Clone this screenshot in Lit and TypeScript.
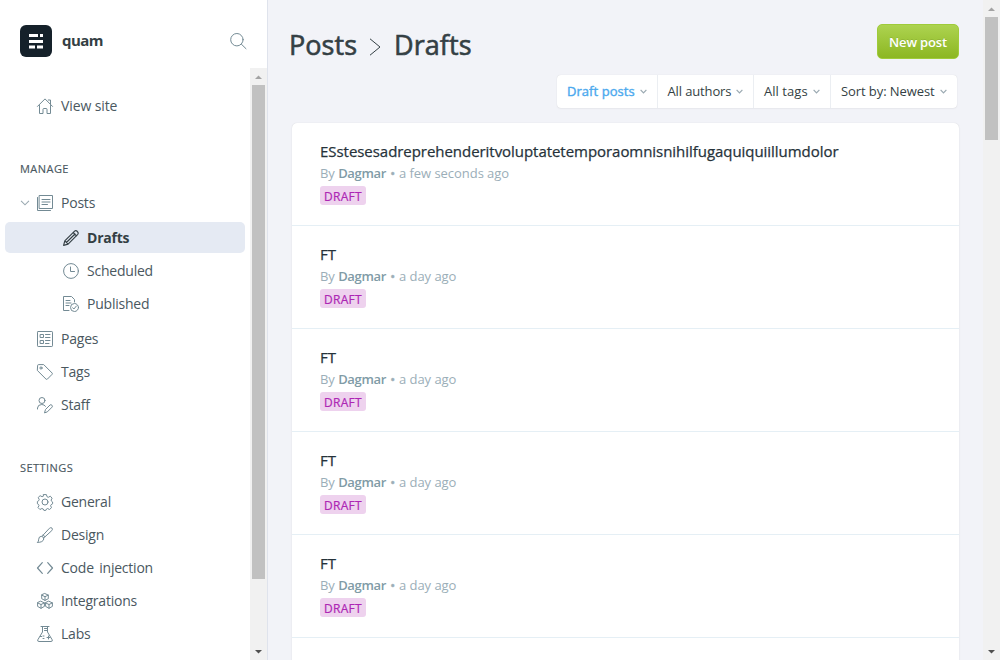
import { LitElement, html, css, svg } from "lit";
import { customElement } from "lit/decorators.js";
import { classMap } from "lit/directives/class-map.js";

// Icon bodies, all drawn on a 16 × 16 grid.
const icons = {
  search: svg`<circle cx="6.9" cy="6.7" r="6.2"/><path d="M11.4 11.2 16 15.7"/>`,
  house: svg`<path d="M.5 8.4 8 .9l7.500 7.500M11.300 2H13.500V6.300M2.500 7.500v8H6v-4.200Q6 10.500 7 10.500H9Q10 10.500 10 11.300V15.500h3.500v-8"/>`,
  posts: svg`<path d="M2.500.5h13v13h-13zM.5 2.500v13h13M5 4.500h8M5 7h8M5 9.500h5.500"/>`,
  pencil: svg`<path d="M.6 15.400 1.800 10.900 11.600 1.100Q12.900-.1 14.400 1.500 16 3.100 14.800 4.400L5.100 14.100ZM1.800 10.900 5.100 14.100M10.200 2.500l3.300 3.300M3.400 12.500 12 4"/>`,
  clock: svg`<circle cx="8" cy="8" r="7.400"/><path d="M7.500 4v4.500H11.500"/>`,
  published: svg`<path d="M6 14.500H.5V.5H8.500L11.500 3.500V6M3 4.500h4M3 7h5M3 9.500h3"/><circle cx="11.500" cy="11.500" r="4"/><path d="m9.600 11.700 1.300 1.300 2.500-3"/>`,
  pages: svg`<rect x=".5" y=".5" width="15" height="15" rx=".7"/><path d="M3.500 3.500h3v3h-3zM3.500 9.500h3v3h-3zM8.500 3.500H13M8.500 6.500H13M8.500 9.500H13M8.500 12.500H12"/>`,
  tag: svg`<path d="M.6 1.400Q.6.6 1.400.6H6.700L15.100 9Q15.700 9.700 15.100 10.300L10.400 15.100Q9.700 15.700 9 15.100L.6 6.700Z"/><circle cx="4" cy="4" r="1.100"/>`,
  staff: svg`<circle cx="5" cy="3.500" r="3"/><path d="M.5 12V11Q.8 7.500 4.800 7.500 7.300 7.500 8.500 9.300M7.600 15.500l.9-3L13 8Q13.900 7.200 14.900 8.200 15.900 9.200 15.100 10.100L10.600 14.600Z"/>`,
  gear: svg`<circle cx="8" cy="8" r="3"/><path d="M6.600.6h2.800l.6 2.100 1.300.6 2-1.100 1.800 2-1 1.900.5 1.200 1 .7v1.800l-1.500.9-.5 1 .9 2-2 1.800-1.900-1-1.100.5-.7 1.400H6.900l-.7-1.400-1.300-.5-2 1-1.900-2 1-1.900-.5-1.200-1.100-.6V7.500l1.300-.8.5-1.200-1-2 1.900-1.800 2 1 1-.4Z"/>`,
  brush: svg`<path d="M.6 15.400Q1.800 14.600 1.700 12.200 1.900 9.400 4.300 9.300 6.900 9.600 6.800 12 6 15.500.6 15.400M5 9.300 12.400 1.300Q13.800.1 15 1.100 16 2.200 14.800 3.600L6.700 11M6.200 8l1.800 1.800"/>`,
  code: svg`<path d="M5.300 2.700.5 8l4.800 5.300M10.700 2.700 15.500 8l-4.800 5.300" stroke-width="1.200"/>`,
  blocks: svg`<path d="m8 .6 3.300 1.500v3.600L8 7.400 4.700 5.700V2.100ZM4.700 2.100 8 3.700l3.300-1.600M8 3.700v3.700M4 8.300l3.400 1.600v3.500L4 15.300.6 13.400V9.900ZM.6 9.900 4 11.500l3.400-1.600M4 11.500v3.800M12 8.300l3.400 1.600v3.500L12 15.300l-3.400-1.900V9.900ZM8.600 9.900l3.400 1.600 3.400-1.600M12 11.500v3.800"/>`,
  flask: svg`<path d="M4 .5h8M5.500.5v5.500L.8 13.800Q.2 15.500 1.900 15.500H14.100Q15.800 15.500 15.200 13.800L10.500 6V.5M7.500 2.500h3M7.500 4.500h3M3.200 10.500h1.500M11.500 10v3M10 11.500h3M6 12.500h1M6 10h1"/>`,
};
type IconName = keyof typeof icons;

const glyph = (name: IconName) =>
  html`<svg class="icon" viewBox="0 0 16 16" width="16" height="16">${icons[name]}</svg>`;

const chevron = html`<svg class="chevron" viewBox="0 0 8 5" width="7" height="5"><path d="M.7.7 4 4 7.300.7"/></svg>`;

const scrollbar = (kind: string) => html`
  <div class="track ${kind}">
    <svg class="up" width="17" height="17"><path d="M5 11h7L8.500 7.500z"/></svg>
    <div class="thumb"></div>
    <svg class="down" width="17" height="17"><path d="M5 7h7L8.500 10.500z"/></svg>
  </div>`;

interface Item { icon: IconName; label: string; sub?: boolean; active?: boolean; open?: boolean }

const manage: Item[] = [
  { icon: "posts", label: "Posts", open: true },
  { icon: "pencil", label: "Drafts", sub: true, active: true },
  { icon: "clock", label: "Scheduled", sub: true },
  { icon: "published", label: "Published", sub: true },
  { icon: "pages", label: "Pages" },
  { icon: "tag", label: "Tags" },
  { icon: "staff", label: "Staff" },
];
const settings: Item[] = [
  { icon: "gear", label: "General" },
  { icon: "brush", label: "Design" },
  { icon: "code", label: "Code injection" },
  { icon: "blocks", label: "Integrations" },
  { icon: "flask", label: "Labs" },
];
const posts = [
  { title: "ESstesesadreprehenderitvoluptatetemporaomnisnihilfugaquiquiillumdolor", when: "a few seconds ago" },
  ...Array.from({ length: 4 }, () => ({ title: "FT", when: "a day ago" })),
];
const filters = ["Draft posts", "All authors", "All tags", "Sort by: Newest"];

@customElement("app-root")
export class AppRoot extends LitElement {
  static styles = css`
    :host { display: flex; height: 660px; overflow: hidden; background: #f2f3f8; color: #343f44; font-family: "Open Sans", "Noto Sans", sans-serif; }
    * { box-sizing: border-box; }
    svg { display: block; flex: none; }
    .icon { fill: none; stroke: #738a94; stroke-width: 1; stroke-linejoin: round; stroke-linecap: round; overflow: visible; }
    .chevron { fill: none; stroke: #9aa9b1; stroke-width: 1.400; }

    .side { width: 268px; flex: none; display: flex; flex-direction: column; background: #fff; border-right: 1px solid #dfe3ec; }
    .brand { height: 68px; flex: none; display: flex; align-items: center; padding: 14px 21px 0 20px; }
    .logo { margin-right: 10px; }
    .name { flex: 1; margin-top: -2px; font-size: 15px; font-weight: 700; letter-spacing: -0.550px; line-height: 20px; }
    .scroller { flex: 1; min-height: 0; display: flex; }
    nav { flex: 1; min-width: 0; padding: 22px 5px 0; overflow: hidden; }
    .row { height: 31px; margin-bottom: 2px; padding-left: 15px; display: flex; align-items: center; border-radius: 5px; font-size: 14px; letter-spacing: -0.220px; word-spacing: 2px; color: #4a585f; }
    .slot { width: 17px; flex: none; }
    .slot .chevron { width: 10px; height: 6px; stroke-width: 0.9; }
    .row .icon { margin-right: 8px; }
    .sub { padding-left: 58px; }
    .active { background: #e5eaf3; color: #343f44; font-weight: 700; }
    .active .icon { stroke: #343f44; stroke-width: 1.150; }
    .open { margin-bottom: 4px; }
    .last { margin-bottom: 4px; }
    .view { letter-spacing: -0.1px; word-spacing: 0; margin-bottom: 36px; }
    h2 { margin: 0 0 6px 15px; font-size: 11px; line-height: 24px; font-weight: 400; letter-spacing: 0.450px; color: #4a585f; -webkit-text-stroke: 0.150px currentColor; }
    .gap { margin-top: 36px; }

    .track { width: 17px; flex: none; display: flex; flex-direction: column; background: #f1f1f1; }
    .thumb { margin: 0 2px; background: #c1c1c1; }
    .up { fill: #a3a3a3; }
    .down { fill: #505050; margin-top: auto; }
    .inner .thumb { height: 494px; }
    .outer .thumb { height: 123px; }

    main { flex: 1; min-width: 0; padding: 24px 24px 0 24px; }
    header { height: 51px; display: flex; justify-content: space-between; align-items: flex-start; }
    h1 { margin: 0 0 0 -3px; display: flex; align-items: center; font-size: 27px; line-height: 42px; font-weight: 500; letter-spacing: 0.050px; -webkit-text-stroke: 0.600px currentColor; }
    h1 svg { margin: 3px 13px 0 12px; fill: none; stroke: #343f44; stroke-width: 1; }
    button { width: 82px; height: 35px; padding: 0; border: 1px solid #9fcb3a; border-radius: 5px; background: linear-gradient(#add350, #8cb722); color: #fff; font: 600 13px/20px "Open Sans", sans-serif; letter-spacing: -0.150px; text-shadow: 0 -1px 0 rgba(0, 0, 0, 0.1); }
    .filters { display: flex; width: 400px; height: 33px; margin: 0 2px 0 auto; background: #fff; border-radius: 4px; box-shadow: 0 0 1px rgba(0, 0, 0, 0.15), 0 1px 2px rgba(0, 0, 0, 0.04); }
    .filter { flex: none; display: flex; align-items: center; justify-content: space-between; padding: 0 10px 1px 10px; font-size: 13px; letter-spacing: -0.080px; border-left: 1px solid #ebeef2; white-space: nowrap; }
    .filter:nth-child(1) { width: 100px; border: 0; color: #4ca9ee; font-weight: 500; letter-spacing: 0.05px; -webkit-text-stroke: 0.400px currentColor; }
    .filter:nth-child(2) { width: 96px; padding-left: 9.500px; letter-spacing: -0.130px; }
    .filter:nth-child(3) { width: 77px; letter-spacing: 0.050px; }
    .filter:nth-child(4) { width: 127px; }
    .list { height: 560px; margin-top: 15px; background: #fff; border-radius: 5px; box-shadow: 0 0 1px rgba(0, 0, 0, 0.15), 0 1px 3px rgba(0, 0, 0, 0.04); }
    .post { height: 103px; padding: 17px 28px 0 28px; border-bottom: 1px solid #e5eff5; }
    h3 { margin: 0 0 1px; font-size: 15px; line-height: 22px; font-weight: 400; letter-spacing: -0.045px; color: #26323a; -webkit-text-stroke: 0.250px currentColor; }
    .meta { font-size: 13px; line-height: 20px; letter-spacing: -0.050px; color: #9baeb8; }
    .meta b { font-weight: 600; letter-spacing: -0.300px; color: #809ba6; }
    .dot { margin: 0 0.700px; -webkit-text-stroke: 0.500px currentColor; }
    .badge { width: 46px; height: 19px; margin-top: 3px; border-radius: 3px; background: #eed2ee; color: #ad26b4; font-size: 12px; line-height: 21px; letter-spacing: 0.25px; text-align: center; -webkit-text-stroke: 0.200px currentColor; }
  `;

  private row(item: Item, last = false) {
    const cls = { row: true, sub: !!item.sub, active: !!item.active, open: !!item.open, last };
    return html`<div class=${classMap(cls)}>
      ${item.sub ? "" : html`<span class="slot">${item.open ? chevron : ""}</span>`}
      ${glyph(item.icon)}<span>${item.label}</span>
    </div>`;
  }

  render() {
    return html`
      <aside class="side">
        <div class="brand">
          <svg class="logo" viewBox="0 0 32 32" width="32" height="32">
            <rect width="32" height="32" rx="6" fill="#15212a"/>
            <path fill="#fff" d="M9 9h9v3H9zM20 9h3v3h-3zM9 15h14v3H9zM9 20.500h6v3H9zM17 20.500h6v3h-6z"/>
          </svg>
          <span class="name">quam</span>
          ${glyph("search")}
        </div>
        <div class="scroller">
          <nav>
            <div class="row view"><span class="slot"></span>${glyph("house")}<span>View site</span></div>
            <h2>MANAGE</h2>
            ${manage.map((m) => this.row(m, m.label === "Published"))}
            <h2 class="gap">SETTINGS</h2>
            ${settings.map((s) => this.row(s))}
          </nav>
          ${scrollbar("inner")}
        </div>
      </aside>
      <main>
        <header>
          <h1>Posts<svg viewBox="0 0 12 18" width="12" height="18"><path d="M1 .8 11 9 1 17.200"/></svg>Drafts</h1>
          <button>New post</button>
        </header>
        <div class="filters">${filters.map((f) => html`<div class="filter"><span>${f}</span>${chevron}</div>`)}</div>
        <section class="list">
          ${posts.map((p) => html`<article class="post">
            <h3>${p.title}</h3>
            <div class="meta">By <b>Dagmar</b> <span class="dot">•</span> ${p.when}</div>
            <div class="badge">DRAFT</div>
          </article>`)}
        </section>
      </main>
      ${scrollbar("outer")}
    `;
  }
}
